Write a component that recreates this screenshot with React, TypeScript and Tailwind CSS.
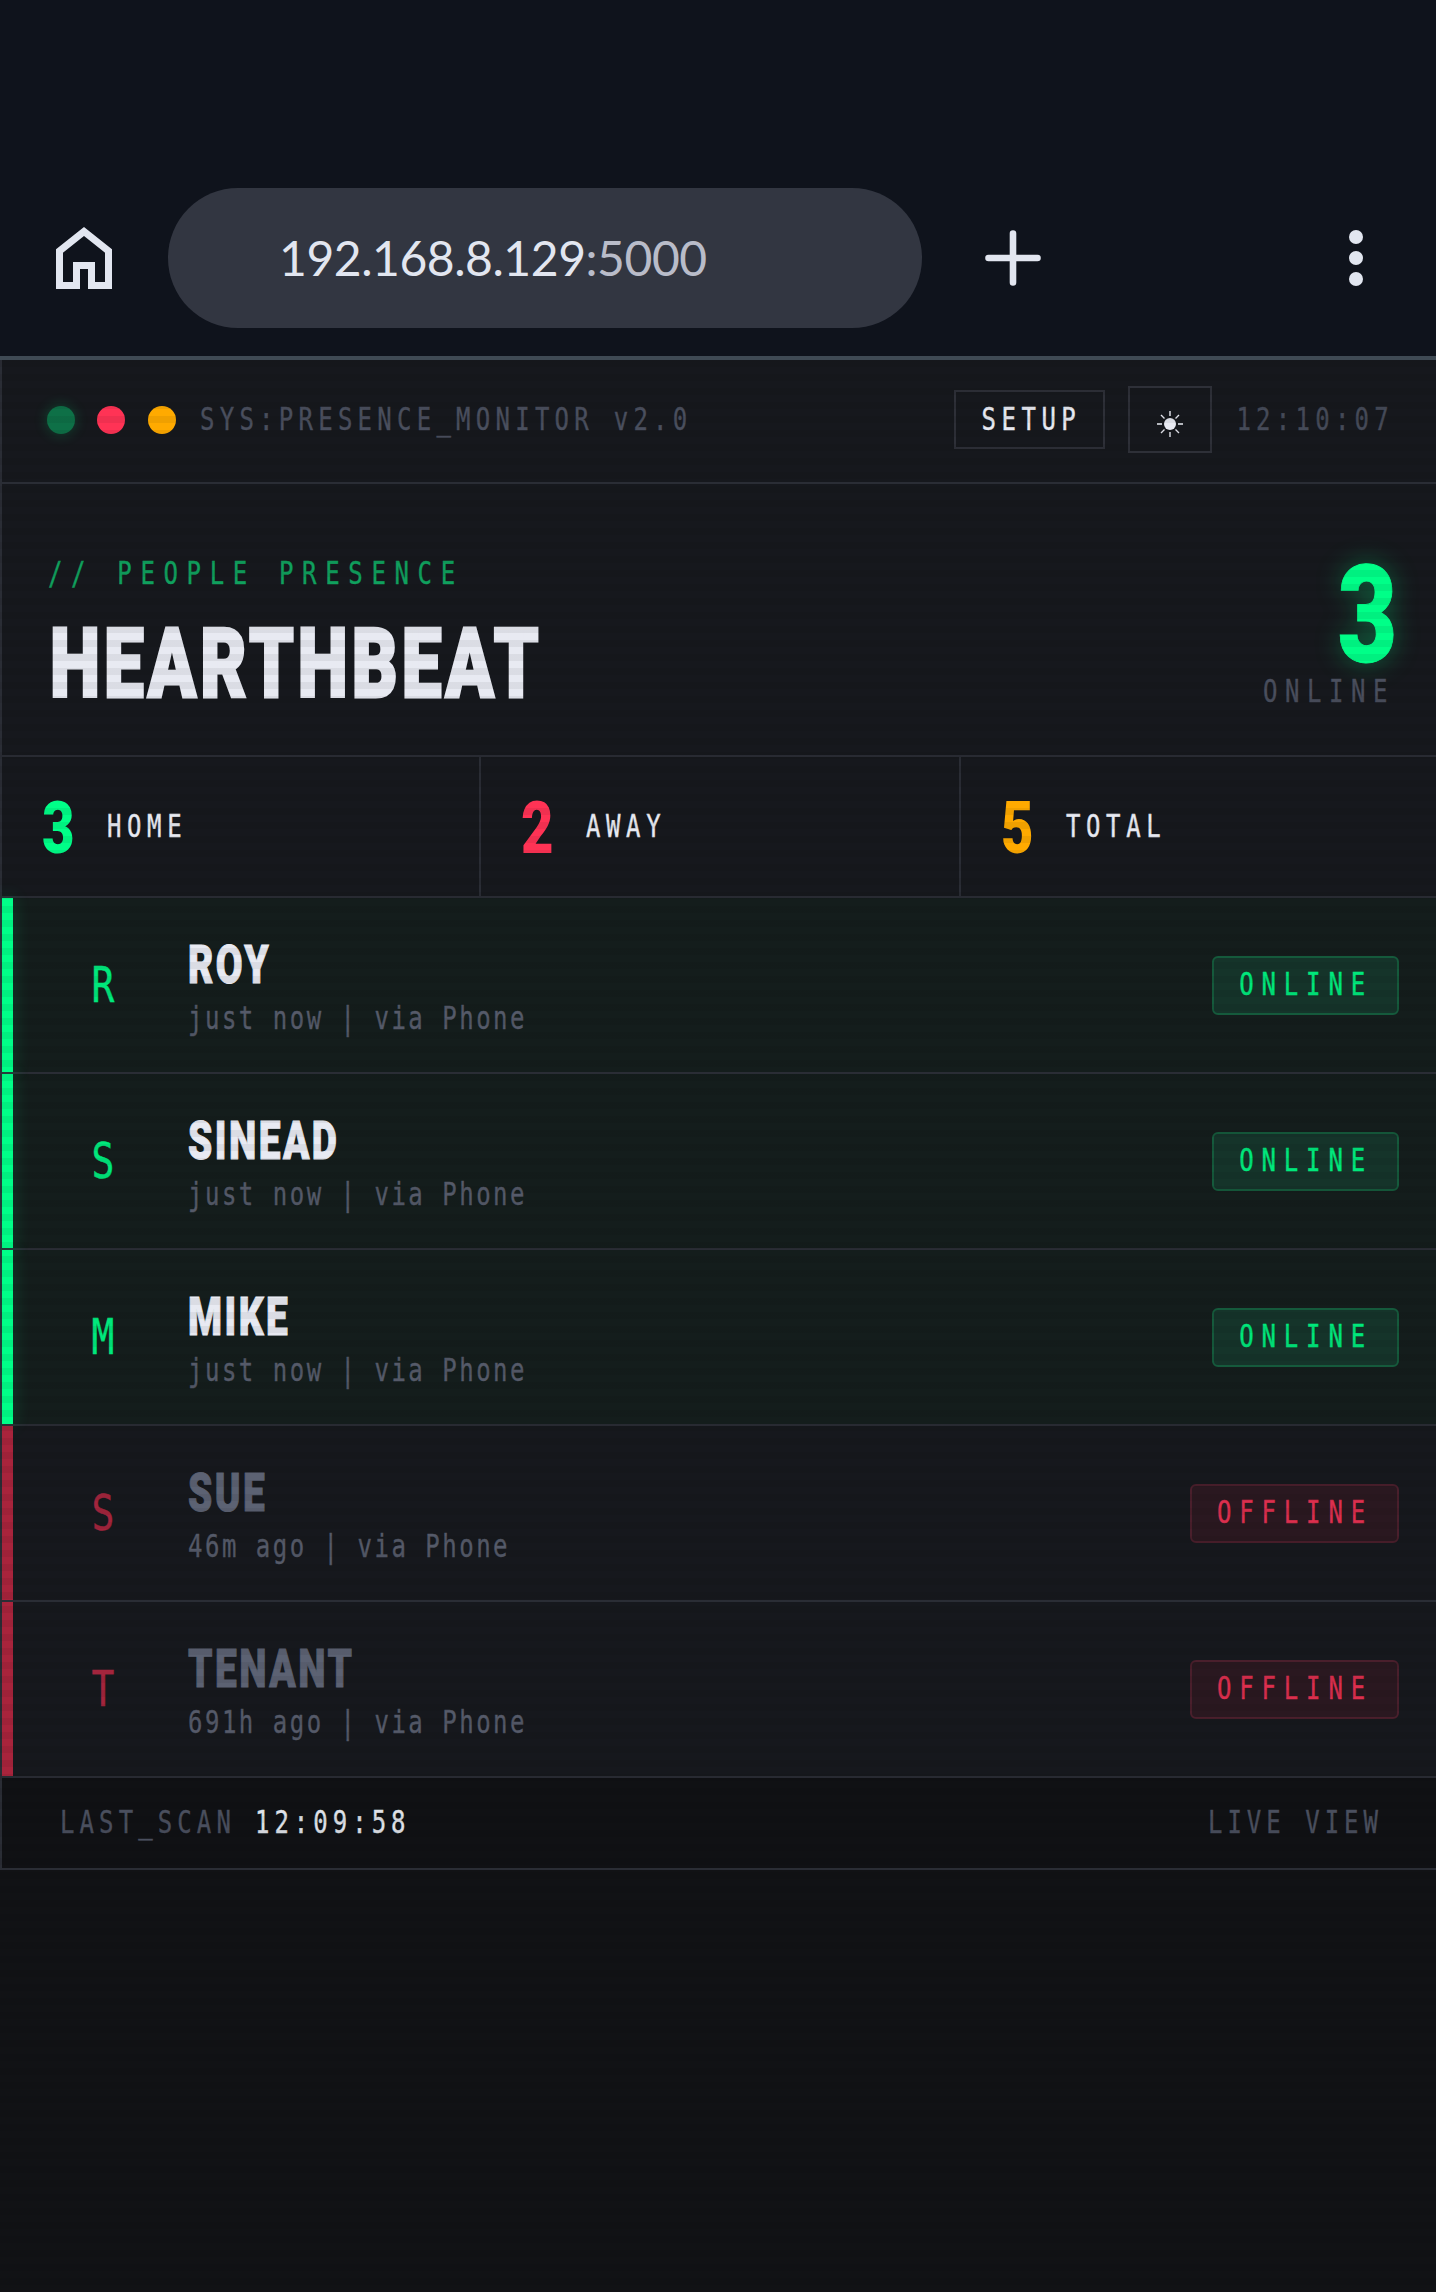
const scanlines =
  "pointer-events-none absolute inset-0 z-10 bg-[repeating-linear-gradient(180deg,rgba(0,0,0,0.06)_0px,rgba(0,0,0,0.06)_7px,transparent_7px,transparent_14px)]";

function Mono({ className, children }: { className: string; children: React.ReactNode }) {
  return (
    <span className={`inline-block scale-y-[1.3] whitespace-pre font-['DejaVu_Sans_Mono',monospace] leading-none [-webkit-text-stroke:0.3px_currentColor] ${className}`}>
      {children}
    </span>
  );
}

function Heavy({ className, children }: { className: string; children: React.ReactNode }) {
  return (
    <span className={`inline-block whitespace-pre font-['Roboto',sans-serif] font-black leading-none ${className}`}>
      {children}
    </span>
  );
}

const people = [
  { name: "ROY", initial: "R", seen: "just now", online: true },
  { name: "SINEAD", initial: "S", seen: "just now", online: true },
  { name: "MIKE", initial: "M", seen: "just now", online: true },
  { name: "SUE", initial: "S", seen: "46m ago", online: false },
  { name: "TENANT", initial: "T", seen: "691h ago", online: false },
];

const stats = [
  { value: "3", label: "HOME", color: "text-[#00ff88]", width: "w-[479px]" },
  { value: "2", label: "AWAY", color: "text-[#ff3355]", width: "w-[480px]" },
  { value: "5", label: "TOTAL", color: "text-[#ffaa00]", width: "flex-1" },
];

function Browser() {
  return (
    <div className="flex h-[360px] items-start border-b-4 border-[#3f4a54] bg-[#0f131c] pt-[188px]">
      <svg viewBox="0 0 56 62" className="ml-[56px] mt-[39px] h-[62px] w-[56px]" fill="none" stroke="#e2e6f0" strokeWidth="7">
        <path d="M3.5 58.5H20.5V38.5H35.5V58.5H52.5V24L28 4.5L3.5 24Z" />
      </svg>
      <div className="ml-[56px] flex h-[140px] w-[754px] items-center rounded-full bg-[#323641] pl-[111px] font-['Lato',sans-serif] text-[48px] tracking-[-0.45px] text-[#e2e6f0]">
        192.168.8.129<span className="text-[#b9bcc9]">:5000</span>
      </div>
      <svg viewBox="0 0 56 56" className="ml-[63px] mt-[42px] h-[56px] w-[56px]" stroke="#e2e6f0" strokeWidth="6.6" strokeLinecap="round">
        <path d="M3.5 28H52.5M28 3.5V52.5" />
      </svg>
      <div className="ml-[308px] mt-[42px] flex flex-col gap-[7px]">
        <div className="h-[14px] w-[14px] rounded-full bg-[#e2e6f0]" />
        <div className="h-[14px] w-[14px] rounded-full bg-[#e2e6f0]" />
        <div className="h-[14px] w-[14px] rounded-full bg-[#e2e6f0]" />
      </div>
    </div>
  );
}

function TopBar() {
  return (
    <div className="flex h-[124px] items-center border-b-2 border-[#2a2d35] pb-[3px] pl-[45px] pr-[42px]">
      <div className="h-[28px] w-[28px] rounded-full bg-[#0e7047] shadow-[0_0_14px_rgba(0,255,136,0.22)]" />
      <div className="ml-[22px] h-[28px] w-[28px] rounded-full bg-[#ff3355]" />
      <div className="ml-[23px] h-[28px] w-[28px] rounded-full bg-[#ffaa00]" />
      <Mono className="ml-[24px] text-[24px] tracking-[5.25px] text-[#4a4f5e]">SYS:PRESENCE_MONITOR v2.0</Mono>
      <button className="ml-auto flex h-[59px] w-[151px] items-center justify-center border-2 border-[#2e3038] pl-[3px]">
        <Mono className="text-[24px] tracking-[5.5px] text-[#e8eaf2]">SETUP</Mono>
      </button>
      <button className="ml-[23px] flex h-[67px] w-[84px] items-center justify-center border-2 border-[#2e3038] pt-[8px]">
        <svg viewBox="0 0 26 26" className="h-[26px] w-[26px]" stroke="#e8eaf2" strokeWidth="1.4">
          <circle cx="13" cy="13" r="6" fill="#e8eaf2" stroke="none" />
          <path d="M13 0V5M13 21V26M0 13H5M21 13H26M4 4L7.5 7.5M18.5 18.5L22 22M22 4L18.5 7.5M7.5 18.5L4 22" />
        </svg>
      </button>
      <Mono className="ml-[24px] text-[24px] tracking-[5.25px] text-[#454a58]">12:10:07</Mono>
    </div>
  );
}

function Hero() {
  return (
    <div className="flex h-[273px] items-start justify-between border-b-2 border-[#2a2d35] pl-[46px] pr-[42px]">
      <div className="flex flex-col items-start pt-[78px]">
        <Mono className="text-[24px] tracking-[8.65px] text-[#10a05e]">// PEOPLE PRESENCE</Mono>
        <Heavy className="ml-[2px] mt-[30px] origin-left scale-x-[0.74] text-[96px] tracking-[5.5px] text-[#e8eaf2] [-webkit-text-stroke:3px_currentColor]">
          HEARTHBEAT
        </Heavy>
      </div>
      <div className="flex flex-col items-end pt-[78px]">
        <Heavy className="mr-[-3px] origin-right scale-x-[0.76] text-[135px] leading-[108px]! text-[#00ff88] [text-shadow:0_0_30px_rgba(0,255,136,0.35)] [-webkit-text-stroke:1px_currentColor]">
          3
        </Heavy>
        <Mono className="mr-[-1px] mt-[10px] text-[24px] tracking-[7.55px] text-[#4a4f5e]">ONLINE</Mono>
      </div>
    </div>
  );
}

function Stats() {
  return (
    <div className="flex h-[141px] items-stretch border-b-2 border-[#2a2d35]">
      {stats.map((stat, i) => (
        <div
          key={stat.label}
          className={`flex items-center gap-[36px] pl-[40px] ${stat.width} ${i < 2 ? "border-r-2 border-[#2a2d35]" : ""}`}
        >
          <Heavy className={`mt-[5px] w-[29px] origin-left scale-x-[0.78] text-[72px] ${stat.color}`}>{stat.value}</Heavy>
          <Mono className="text-[24px] tracking-[5.6px] text-[#e8eaf2]">{stat.label}</Mono>
        </div>
      ))}
    </div>
  );
}

function PersonRow({ name, initial, seen, online }: (typeof people)[number]) {
  return (
    <div className={`flex h-[176px] items-center border-b-2 border-[#2a2d35] pr-[37px] ${online ? "bg-[#141d1c]" : "bg-[#16181d]"}`}>
      <div
        className={`w-[11px] self-stretch ${online ? "bg-[#00ff88] shadow-[0_0_18px_rgba(0,255,136,0.2)]" : "bg-[#a8243c]"}`}
      />
      <div className="ml-[62px] w-[56px] text-center">
        <Mono className={`text-[38px] ${online ? "text-[#00e87c]" : "text-[#a3253d]"}`}>{initial}</Mono>
      </div>
      <div className="ml-[57px] flex flex-col items-start">
        <Heavy className={`mt-[-1px] origin-left scale-x-[0.72] text-[54px] tracking-[3.4px] [-webkit-text-stroke:1px_currentColor] ${online ? "text-[#e8eaf2]" : "text-[#5c6273]"}`}>{name}</Heavy>
        <Mono className="mt-[15px] text-[24px] tracking-[2.5px] text-[#555a69]">{seen} | via Phone</Mono>
      </div>
      <div
        className={`ml-auto flex h-[59px] items-center rounded-[6px] border-2 pl-[25px] pr-[24px] ${
          online ? "border-[#155a3c] bg-[#15342a]" : "border-[#4a1f2c] bg-[#2a1820]"
        }`}
      >
        <Mono className={`text-[24px] tracking-[7.85px] ${online ? "text-[#00e87c]" : "text-[#dc2f4e]"}`}>
          {online ? "ONLINE" : "OFFLINE"}
        </Mono>
      </div>
    </div>
  );
}

export default function App() {
  return (
    <div className="flex min-h-[2292px] flex-col bg-[#111215]">
      <Browser />
      <div className="relative flex-1">
        <div className="border-b-2 border-l-2 border-[#2a2d35] bg-[#16181d]">
          <TopBar />
          <Hero />
          <Stats />
          {people.map((person) => (
            <PersonRow key={person.name} {...person} />
          ))}
          <div className="flex h-[90px] items-center justify-between bg-[#101114] pl-[58px] pr-[53px]">
            <div className="flex items-center">
              <Mono className="text-[24px] tracking-[5.1px] text-[#4a4f5e]">LAST_SCAN</Mono>
              <Mono className="ml-[19px] text-[24px] tracking-[5px] text-[#dfe1e8]">12:09:58</Mono>
            </div>
            <Mono className="text-[24px] tracking-[5px] text-[#4a4f5e]">LIVE VIEW</Mono>
          </div>
        </div>
        <div className={scanlines} />
      </div>
    </div>
  );
}
